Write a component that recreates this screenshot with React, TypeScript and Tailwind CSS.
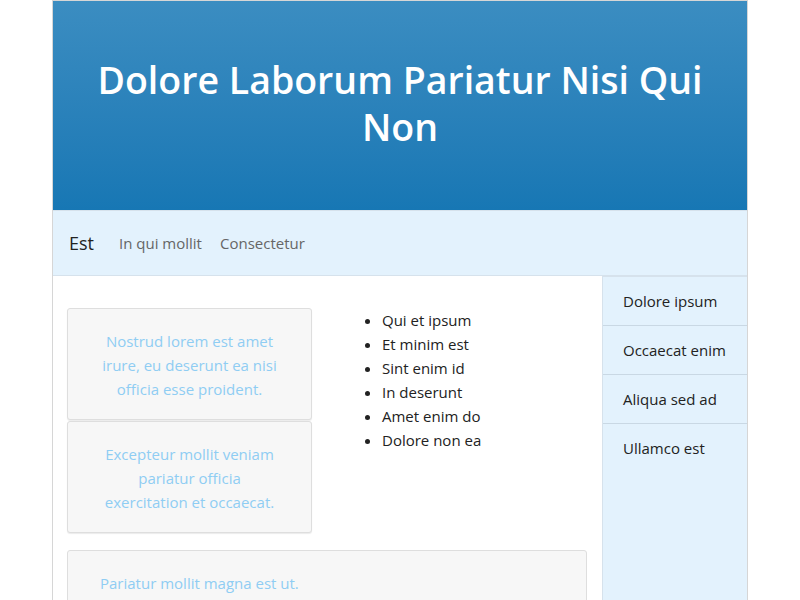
export default function App() {
  const items = ['Qui et ipsum', 'Et minim est', 'Sint enim id', 'In deserunt', 'Amet enim do', 'Dolore non ea'];
  const side = ['Dolore ipsum', 'Occaecat enim', 'Aliqua sed ad', 'Ullamco est'];
  return (
    <div className="min-h-screen bg-white font-['Open_Sans',sans-serif]">
      <div className="mx-auto w-[696px] h-[600px] overflow-hidden border border-[#d6d6d6] border-b-0 flex flex-col">
        <header className="h-[209px] shrink-0 flex items-center justify-center bg-gradient-to-b from-[#3b8dc1] to-[#1777b4] px-10 pb-[6px]">
          <h1 className="text-center text-[37.5px] leading-[47px] font-semibold text-white">
            Dolore Laborum Pariatur Nisi Qui Non
          </h1>
        </header>
        <nav className="h-[66px] shrink-0 flex items-center gap-4 px-4 bg-[#e3f2fd] border-y border-[#d6e2ec]">
          <span className="text-[18px] text-[#222]">Est</span>
          <span className="ml-[9px] text-[15px] text-[#666]">In qui mollit</span>
          <span className="ml-[2px] text-[15px] text-[#666]">Consectetur</span>
        </nav>
        <div className="flex flex-1">
          <main className="flex-1 pl-[14px] pr-[15px] pt-8">
            <div className="grid grid-cols-[245px_1fr] gap-[30px]">
              <div className="flex flex-col gap-px">
                <div className="h-[112px] rounded-[3px] border border-[#dedede] bg-[#f7f7f7] shadow-[0_1px_1px_rgba(0,0,0,0.08)] px-[30px] pt-5 text-center text-[15px] leading-6 text-[#8fcdf3]">
                  Nostrud lorem est amet irure, eu deserunt ea nisi officia esse proident.
                </div>
                <div className="h-[112px] rounded-[3px] border border-[#dedede] bg-[#f7f7f7] shadow-[0_1px_1px_rgba(0,0,0,0.08)] px-[30px] pt-5 text-center text-[15px] leading-6 text-[#8fcdf3]">
                  Excepteur mollit veniam pariatur officia exercitation et occaecat.
                </div>
              </div>
              <ul className="list-disc pl-10 text-[15px] leading-6 text-[#222]">
                {items.map((t) => (
                  <li key={t}>{t}</li>
                ))}
              </ul>
            </div>
            <div className="mt-[17px] h-[80px] rounded-[3px] border border-[#dedede] bg-[#f7f7f7] pl-8 pr-6 pt-5 text-[15px] leading-6 text-[#8fcdf3]">
              Pariatur mollit magna est ut.
            </div>
          </main>
          <aside className="w-[145px] shrink-0 bg-[#e3f2fd] border-l border-t border-[#d6e2ec]">
            {side.map((t, i) => (
              <div
                key={t}
                className={`h-[49px] flex items-center pl-5 text-[15px] text-[#222] ${i < 3 ? 'border-b border-[#c9d8e4]' : ''}`}
              >
                {t}
              </div>
            ))}
          </aside>
        </div>
      </div>
    </div>
  );
}
